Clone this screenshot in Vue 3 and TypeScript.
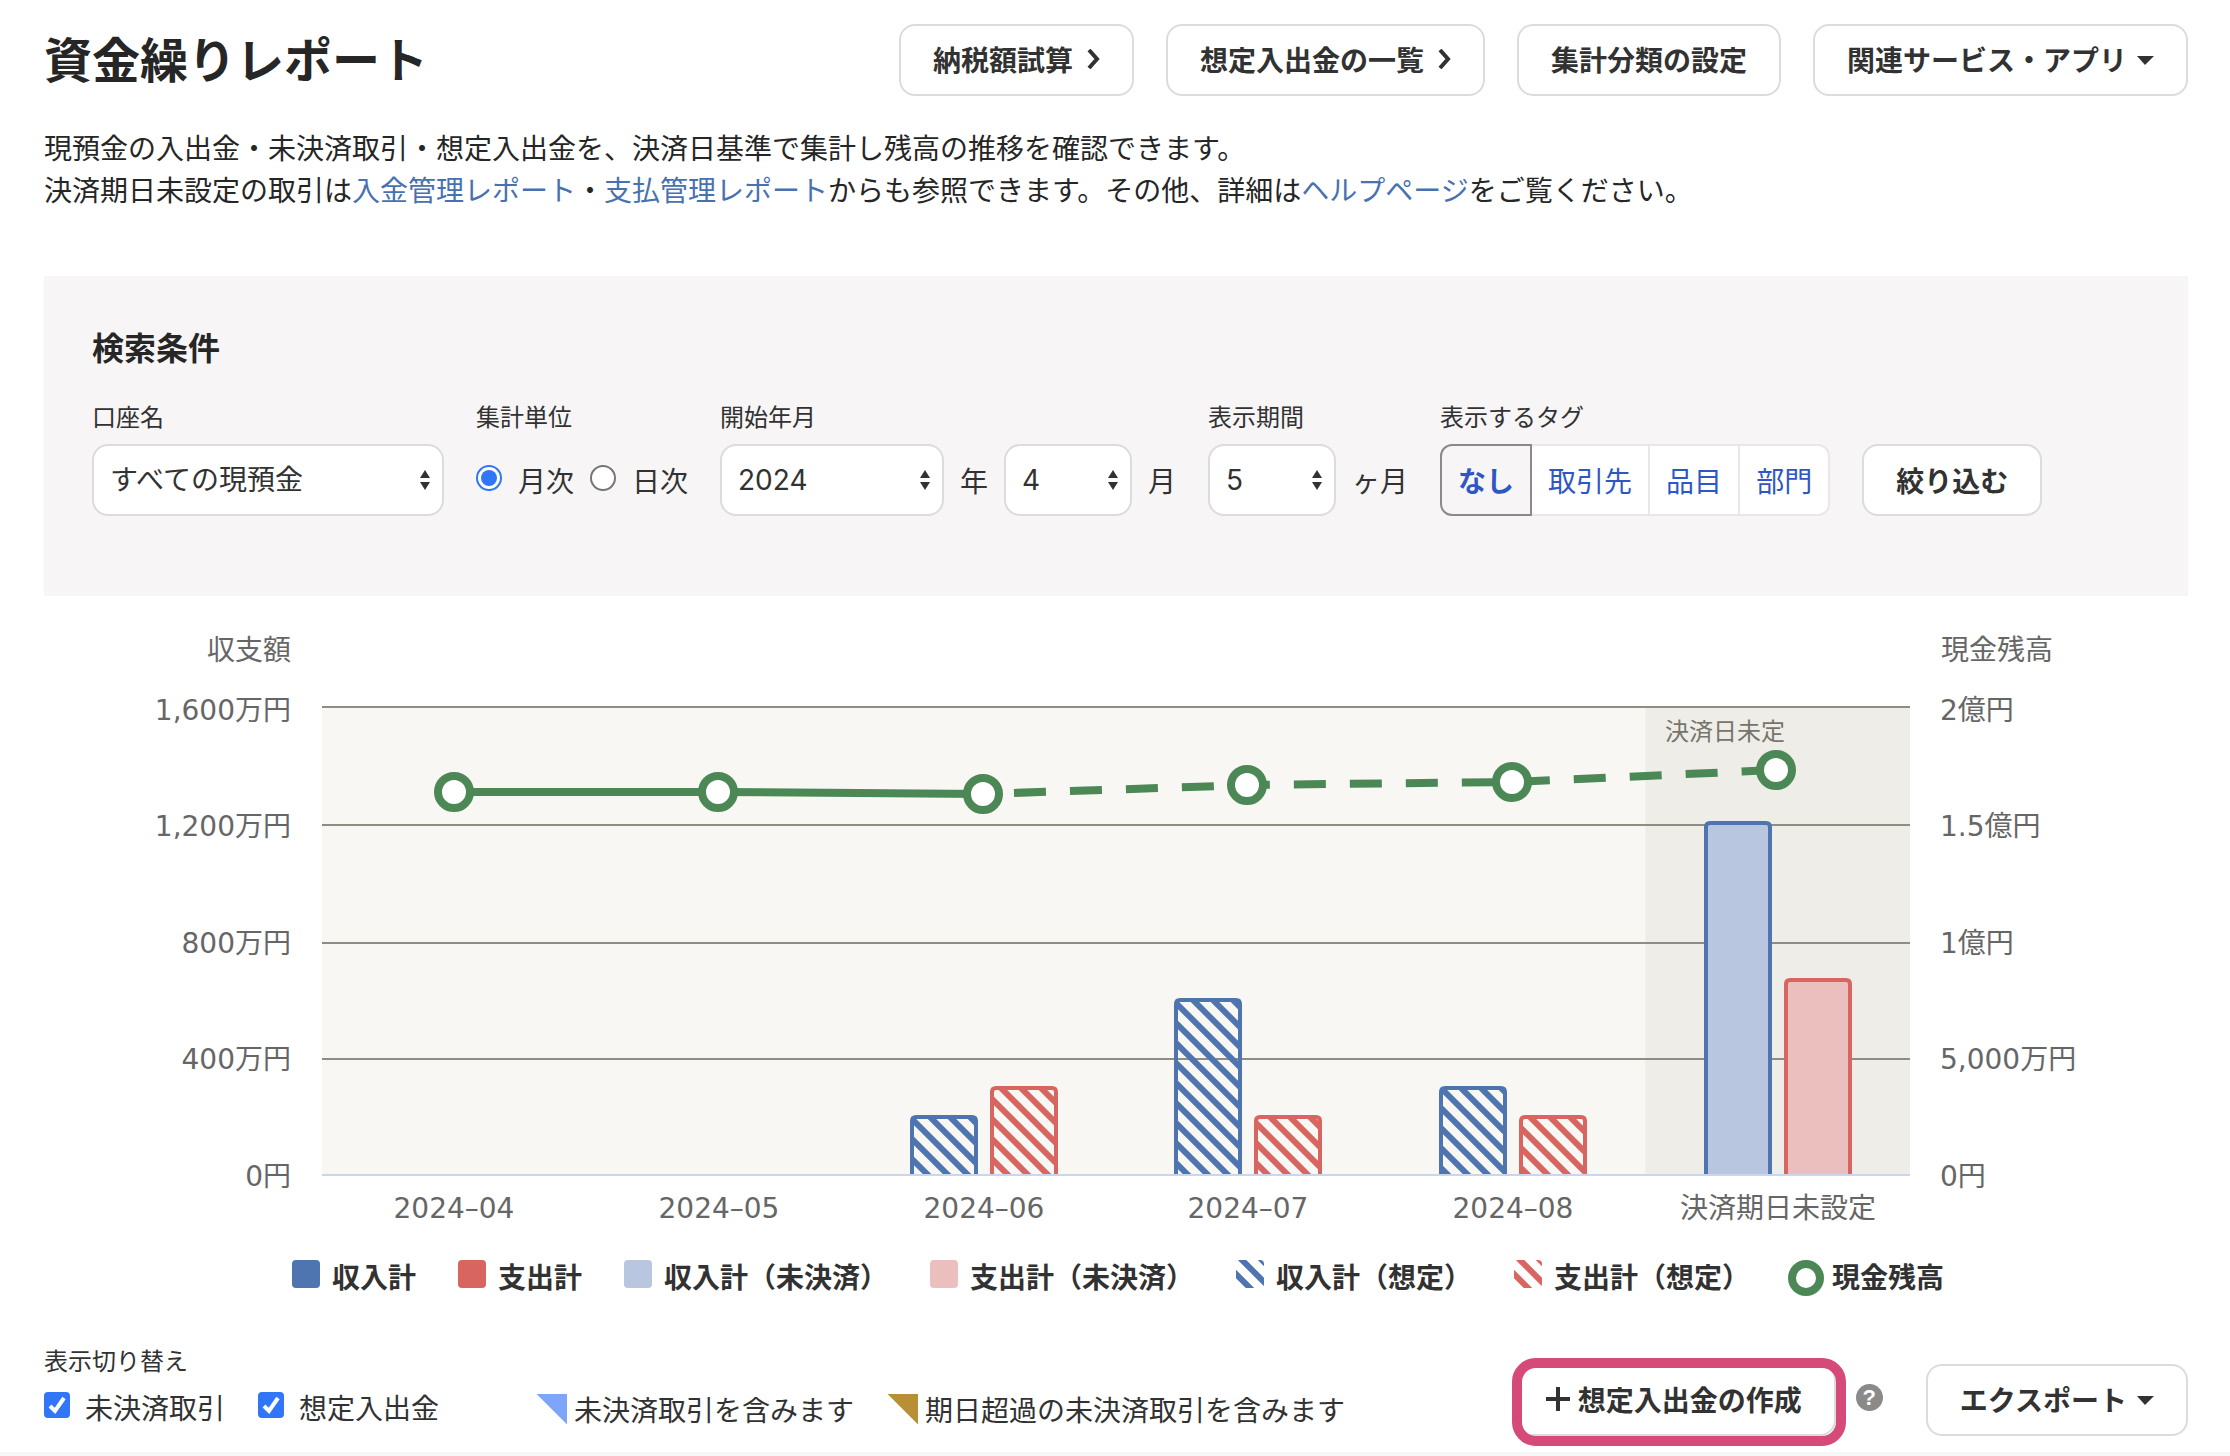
<script setup lang="ts">
import { computed, ref } from 'vue'

type Kind = 'planned' | 'unsettled'

interface Period {
  label: string
  income: number
  expense: number
  balance: number
  kind: Kind
}

const account = ref('すべての現預金')
const unit = ref('monthly')
const year = ref('2024')
const month = ref('4')
const span = ref('5')
const tags = ['なし', '取引先', '品目', '部門']
const activeTag = ref('なし')
const showUnsettled = ref(true)
const showPlanned = ref(true)

// Amounts are in 万円.
const periods: Period[] = [
  { label: '2024–04', income: 0, expense: 0, balance: 16380, kind: 'planned' },
  { label: '2024–05', income: 0, expense: 0, balance: 16380, kind: 'planned' },
  { label: '2024–06', income: 200, expense: 300, balance: 16280, kind: 'planned' },
  { label: '2024–07', income: 600, expense: 200, balance: 16680, kind: 'planned' },
  { label: '2024–08', income: 300, expense: 200, balance: 16780, kind: 'planned' },
  { label: '決済期日未設定', income: 1206, expense: 668, balance: 17320, kind: 'unsettled' },
]

const plot = { left: 278, right: 1866, top: 111, bottom: 579 }
const plotWidth = plot.right - plot.left
const plotHeight = plot.bottom - plot.top
const columnWidth = plotWidth / periods.length
const barWidth = 68
const barStroke = 4

const amountTicks = ['1,600万円', '1,200万円', '800万円', '400万円', '0円']
const balanceTicks = ['2億円', '1.5億円', '1億円', '5,000万円', '0円']
const gridLines = [111, 229, 347, 463]
const tickY = (i: number) => 124 + Math.floor(i * 116.6)

const centers = periods.map((_, i) => Math.round(plot.left + columnWidth * (i + 0.5)))
const points = periods.map((p, i) => ({
  x: Math.round(410 + i * 264.4),
  y: Math.round(plot.bottom - (p.balance / 20000) * plotHeight),
}))
const toPath = (list: { x: number; y: number }[]) =>
  list.map((p, i) => `${i ? 'L' : 'M'}${p.x} ${p.y}`).join(' ')
const actualPath = toPath(points.slice(0, 3))
const forecastPath = toPath(points.slice(2))

const bars = computed(() =>
  periods.flatMap((p, i) =>
    [
      { side: 'income', value: p.income, x: centers[i] - 74 },
      { side: 'expense', value: p.expense, x: centers[i] + 6 },
    ]
      .filter((b) => b.value > 0)
      .filter(() => (p.kind === 'planned' ? showPlanned.value : showUnsettled.value))
      .map((b) => {
        const top = Math.floor(plot.bottom - 1 - (b.value / 1600) * plotHeight)
        const l = b.x + barStroke / 2
        const r = b.x + barWidth - barStroke / 2
        const t = top + barStroke / 2
        return {
          key: `${p.label}-${b.side}`,
          cls: `${b.side} ${p.kind}`,
          d: `M${l} ${plot.bottom - 1} V${t + 4} Q${l} ${t} ${l + 4} ${t} H${r - 4} Q${r} ${t} ${r} ${t + 4} V${plot.bottom - 1}`,
        }
      }),
  ),
)

const legend = [
  { label: '収入計', swatch: 'income-solid' },
  { label: '支出計', swatch: 'expense-solid' },
  { label: '収入計（未決済）', swatch: 'income-light' },
  { label: '支出計（未決済）', swatch: 'expense-light' },
  { label: '収入計（想定）', swatch: 'income-hatch' },
  { label: '支出計（想定）', swatch: 'expense-hatch' },
  { label: '現金残高', swatch: 'ring' },
]
</script>

<template>
  <main class="page">
    <header class="header">
      <h1>資金繰りレポート</h1>
      <nav class="actions">
        <button type="button" class="btn">
          納税額試算
          <svg class="chevron" viewBox="0 0 13 20" aria-hidden="true"><path d="M2 1 L10 10 L2 19" /></svg>
        </button>
        <button type="button" class="btn">
          想定入出金の一覧
          <svg class="chevron" viewBox="0 0 13 20" aria-hidden="true"><path d="M2 1 L10 10 L2 19" /></svg>
        </button>
        <button type="button" class="btn">集計分類の設定</button>
        <button type="button" class="btn">
          関連サービス・アプリ
          <svg class="caret" viewBox="0 0 17 9" aria-hidden="true"><path d="M0 0 H17 L8 9 Z" /></svg>
        </button>
      </nav>
    </header>

    <p class="lead">
      現預金の入出金・未決済取引・想定入出金を、決済日基準で集計し残高の推移を確認できます。<br />決済期日未設定の取引は<a href="#receipts">入金管理レポート</a>・<a href="#payments">支払管理レポート</a>からも参照できます。その他、詳細は<a href="#help">ヘルプページ</a>をご覧ください。
    </p>

    <section class="search">
      <h2>検索条件</h2>
      <form class="filters" @submit.prevent>
        <div class="field">
          <label class="caption" for="account">口座名</label>
          <span class="select wide">
            <select id="account" v-model="account"><option>すべての現預金</option></select>
            <svg viewBox="0 0 10 20" aria-hidden="true"><path d="M0 8 L5 0 L10 8 Z M0 12 H10 L5 20 Z" /></svg>
          </span>
        </div>
        <div class="field" role="radiogroup" aria-labelledby="unit-caption">
          <span id="unit-caption" class="caption">集計単位</span>
          <div class="controls radios">
            <label><input v-model="unit" type="radio" name="unit" value="monthly" />月次</label>
            <label><input v-model="unit" type="radio" name="unit" value="daily" />日次</label>
          </div>
        </div>
        <div class="field">
          <label class="caption" for="year">開始年月</label>
          <div class="controls">
            <span class="select medium">
              <select id="year" v-model="year"><option>2024</option></select>
              <svg viewBox="0 0 10 20" aria-hidden="true"><path d="M0 8 L5 0 L10 8 Z M0 12 H10 L5 20 Z" /></svg>
            </span>
            <span>年</span>
            <span class="select narrow">
              <select id="month" v-model="month" aria-label="開始月"><option>4</option></select>
              <svg viewBox="0 0 10 20" aria-hidden="true"><path d="M0 8 L5 0 L10 8 Z M0 12 H10 L5 20 Z" /></svg>
            </span>
            <span>月</span>
          </div>
        </div>
        <div class="field">
          <label class="caption" for="span">表示期間</label>
          <div class="controls">
            <span class="select narrow">
              <select id="span" v-model="span"><option>5</option></select>
              <svg viewBox="0 0 10 20" aria-hidden="true"><path d="M0 8 L5 0 L10 8 Z M0 12 H10 L5 20 Z" /></svg>
            </span>
            <span>ヶ月</span>
          </div>
        </div>
        <div class="field" role="group" aria-labelledby="tag-caption">
          <span id="tag-caption" class="caption">表示するタグ</span>
          <div class="tags">
            <button
              v-for="tag in tags"
              :key="tag"
              type="button"
              :class="{ active: tag === activeTag }"
              :aria-pressed="tag === activeTag"
              @click="activeTag = tag"
            >{{ tag }}</button>
          </div>
        </div>
        <button type="submit" class="btn submit">絞り込む</button>
      </form>
    </section>

    <section class="report">
      <svg class="chart" viewBox="0 0 2144 644" role="img" aria-label="収支額と現金残高の推移">
        <defs>
          <pattern id="hatch-income" width="20" height="20" patternUnits="userSpaceOnUse">
            <path class="hatch-income" d="M-20 -25 L40 35 M-20 -5 L40 55 M-20 -45 L40 15" />
          </pattern>
          <pattern id="hatch-expense" width="20" height="20" patternUnits="userSpaceOnUse">
            <path class="hatch-expense" d="M-20 -25 L40 35 M-20 -5 L40 55 M-20 -45 L40 15" />
          </pattern>
        </defs>
        <rect class="plot" :x="plot.left" :y="plot.top" :width="plotWidth" :height="plotHeight" />
        <rect
          class="plot-undated"
          :x="plot.right - columnWidth"
          :y="plot.top"
          :width="columnWidth"
          :height="plotHeight"
        />
        <line v-for="y in gridLines" :key="y" class="grid" :x1="plot.left" :x2="plot.right" :y1="y" :y2="y" />
        <text class="undated" x="1621" y="144">決済日未定</text>
        <path v-for="bar in bars" :key="bar.key" class="bar" :class="bar.cls" :d="bar.d" />
        <line class="base" :x1="plot.left" :x2="plot.right" :y1="plot.bottom" :y2="plot.bottom" />
        <path class="balance" :d="actualPath" />
        <path class="balance forecast" :d="forecastPath" />
        <circle v-for="p in points" :key="p.x" class="marker" :cx="p.x" :cy="p.y" r="16" />
        <g class="axis">
          <text x="247" y="64" text-anchor="end">収支額</text>
          <text x="1897" y="64">現金残高</text>
          <text v-for="(t, i) in amountTicks" :key="'a' + t" x="247" :y="tickY(i)" text-anchor="end">{{ t }}</text>
          <text v-for="(t, i) in balanceTicks" :key="'b' + t" x="1896" :y="tickY(i)">{{ t }}</text>
          <text v-for="(p, i) in periods" :key="p.label" :x="centers[i]" y="622" text-anchor="middle">{{ p.label }}</text>
        </g>
      </svg>

      <ul class="legend">
        <li v-for="item in legend" :key="item.swatch">
          <svg v-if="item.swatch === 'ring'" class="ring" viewBox="0 0 36 36" aria-hidden="true">
            <circle cx="18" cy="18" r="14" />
          </svg>
          <svg v-else-if="item.swatch.endsWith('hatch')" class="hatch" :class="item.swatch" viewBox="0 0 28 28" aria-hidden="true">
            <path d="M-10 4 L30 44 M-10 -16 L40 34 M10 -16 L40 14" />
          </svg>
          <span v-else class="swatch" :class="item.swatch"></span>
          {{ item.label }}
        </li>
      </ul>
    </section>

    <section class="footer">
      <div class="toggles">
        <span id="toggle-caption" class="caption">表示切り替え</span>
        <div class="toggle-row">
          <div class="checks" role="group" aria-labelledby="toggle-caption">
            <label>
              <input v-model="showUnsettled" type="checkbox" />
              <svg viewBox="0 0 26 26" aria-hidden="true"><path d="M6 14 L11 19 L20 6" /></svg>
              未決済取引
            </label>
            <label>
              <input v-model="showPlanned" type="checkbox" />
              <svg viewBox="0 0 26 26" aria-hidden="true"><path d="M6 14 L11 19 L20 6" /></svg>
              想定入出金
            </label>
          </div>
          <div class="notes">
            <span class="note"><i class="corner blue"></i>未決済取引を含みます</span>
            <span class="note"><i class="corner gold"></i>期日超過の未決済取引を含みます</span>
          </div>
        </div>
      </div>
      <div class="operations">
        <span class="highlight">
          <button type="button" class="btn">
            <svg class="plus" viewBox="0 0 24 24" aria-hidden="true"><path d="M12 0 V24 M0 12 H24" /></svg>
            想定入出金の作成
          </button>
        </span>
        <button type="button" class="help" aria-label="ヘルプ">?</button>
        <button type="button" class="btn">
          エクスポート
          <svg class="caret" viewBox="0 0 17 9" aria-hidden="true"><path d="M0 0 H17 L8 9 Z" /></svg>
        </button>
      </div>
    </section>
  </main>
</template>

<style>
html {
  background: #f6f6f6;
}
</style>

<style scoped>
.page {
  box-sizing: border-box;
  padding: 24px 42px 16px 44px;
  background: #fff;
  color: #323232;
  font-family: 'Noto Sans CJK JP', sans-serif;
  font-size: 28px;
  line-height: 42px;
}

h1,
h2,
p,
ul {
  margin: 0;
  padding: 0;
}

button,
select {
  font: inherit;
  color: inherit;
}

.header {
  display: flex;
  align-items: flex-start;
  justify-content: space-between;
}

h1 {
  color: #262626;
  font-size: 48px;
  line-height: 66px;
}

.actions {
  display: flex;
  gap: 32px;
}

.btn {
  box-sizing: border-box;
  display: inline-flex;
  align-items: center;
  justify-content: center;
  height: 72px;
  padding: 0 32px 2px;
  border: 2px solid #dcdcdc;
  border-radius: 16px;
  background: #fff;
  font-weight: 700;
  white-space: nowrap;
}

.chevron {
  width: 13px;
  height: 20px;
  margin-left: 14px;
  fill: none;
  stroke: #323232;
  stroke-width: 4;
}

.caret {
  width: 17px;
  height: 9px;
  margin: 2px 0 0 10px;
  fill: #323232;
}

.lead {
  margin-top: 30px;
  color: #262626;
}

a {
  color: #4871b0;
  text-decoration: none;
}

.search {
  margin-top: 66px;
  padding: 46px 48px 80px;
  background: #f7f5f6;
}

h2 {
  margin-bottom: 28px;
  color: #262626;
  font-size: 32px;
  line-height: 48px;
}

.filters {
  display: flex;
  align-items: flex-end;
  gap: 32px;
}

.field {
  display: flex;
  flex-direction: column;
  gap: 10px;
}

.caption {
  font-size: 24px;
  line-height: 36px;
}

.controls {
  display: flex;
  align-items: center;
  gap: 16px;
  height: 72px;
}

.select {
  position: relative;
  display: block;
}

.select select {
  box-sizing: border-box;
  display: block;
  width: 100%;
  height: 72px;
  padding: 0 32px 0 16px;
  border: 2px solid #dcdcdc;
  border-radius: 16px;
  background: #fff;
  font-family: Inter, 'Noto Sans CJK JP', sans-serif;
  appearance: none;
}

.select svg {
  position: absolute;
  top: 26px;
  right: 14px;
  width: 10px;
  height: 20px;
  fill: #323232;
  pointer-events: none;
}

.wide {
  width: 352px;
}

.medium {
  width: 224px;
}

.narrow {
  width: 128px;
}

.radios label {
  display: flex;
  align-items: center;
  gap: 16px;
}

.radios input {
  display: grid;
  place-items: center;
  box-sizing: border-box;
  width: 26px;
  height: 26px;
  margin: 0 0 4px;
  border: 2px solid #767676;
  border-radius: 50%;
  background: #fff;
  appearance: none;
}

.radios input:checked {
  border-color: #3076f6;
}

.radios input:checked::before {
  width: 16px;
  height: 16px;
  border-radius: 50%;
  background: #3076f6;
  content: '';
}

.tags {
  display: flex;
}

.tags button {
  box-sizing: border-box;
  height: 72px;
  margin-left: -2px;
  padding: 0 16px;
  border: 2px solid #e9e7e7;
  background: #fff;
  color: #2f57c4;
}

.tags button:first-child {
  margin-left: 0;
  border-radius: 12px 0 0 12px;
}

.tags button:last-child {
  border-radius: 0 12px 12px 0;
}

.tags button.active {
  z-index: 1;
  border-color: #8c8989;
  background: #f7f5f6;
  font-weight: 700;
}

.submit {
  padding: 0 32px;
}

.chart {
  display: block;
  width: 100%;
  height: auto;
}

.plot {
  fill: #f8f7f4;
}

.plot-undated {
  fill: #eeede8;
}

.grid {
  stroke: #8f8d82;
  stroke-width: 2;
}

.base {
  stroke: #ccd6eb;
  stroke-width: 2;
}

.axis {
  fill: #666;
  font-family: 'DejaVu Sans', 'Noto Sans CJK JP', sans-serif;
  font-size: 28px;
}

.undated {
  fill: #77756a;
  font-size: 24px;
}

.hatch-income {
  fill: none;
  stroke: #4f75b0;
  stroke-width: 6;
}

.hatch-expense {
  fill: none;
  stroke: #d8655f;
  stroke-width: 6;
}

.bar {
  stroke-width: 4;
}

.bar.income {
  stroke: #4f75b0;
}

.bar.expense {
  stroke: #d8655f;
}

.income.planned {
  fill: url(#hatch-income);
}

.expense.planned {
  fill: url(#hatch-expense);
}

.income.unsettled {
  fill: #b8c6df;
}

.expense.unsettled {
  fill: #ecbfbf;
}

.balance {
  fill: none;
  stroke: #4c8756;
  stroke-width: 8;
}

.forecast {
  stroke-dasharray: 32 24;
  stroke-dashoffset: 25;
}

.marker {
  fill: #fff;
  stroke: #4c8756;
  stroke-width: 8;
}

.legend {
  display: flex;
  justify-content: center;
  gap: 42px;
  margin-top: 16px;
  padding-left: 4px;
  font-weight: 700;
  line-height: 40px;
  list-style: none;
}

.legend li {
  display: flex;
  align-items: center;
  gap: 12px;
  white-space: nowrap;
}

.swatch,
.hatch {
  width: 28px;
  height: 28px;
  margin-bottom: 4px;
  border-radius: 4px;
}

.hatch path {
  stroke-width: 6;
}

.income-solid {
  background: #4f75b0;
}

.expense-solid {
  background: #d8655f;
}

.income-light {
  background: #b8c6df;
}

.expense-light {
  background: #ecbfbf;
}

svg.income-hatch {
  stroke: #4f75b0;
}

svg.expense-hatch {
  stroke: #d8655f;
}

.ring {
  width: 36px;
  height: 36px;
  margin: 4px -4px 0;
  fill: none;
  stroke: #4c8756;
  stroke-width: 8;
}

.footer {
  display: flex;
  align-items: flex-end;
  justify-content: space-between;
  margin-top: 46px;
}

.toggles {
  display: flex;
  flex-direction: column;
  gap: 8px;
  padding-bottom: 6px;
}

.toggle-row {
  display: flex;
  align-items: flex-start;
  gap: 97px;
  white-space: nowrap;
}

.checks,
.notes {
  display: flex;
  gap: 33px;
}

.checks label {
  position: relative;
  display: flex;
  align-items: center;
  gap: 15px;
}

.checks input {
  width: 26px;
  height: 26px;
  margin: 0 0 4px;
  border-radius: 4px;
  border: 2px solid #767676;
  box-sizing: border-box;
  background: #fff;
  appearance: none;
}

.checks input:checked {
  border-color: #3076f6;
  background: #3076f6;
}

.checks svg {
  position: absolute;
  top: 6px;
  left: 0;
  width: 26px;
  height: 26px;
  fill: none;
  stroke: #fff;
  stroke-width: 4;
  pointer-events: none;
}

.notes {
  padding-top: 2px;
}

.note {
  display: flex;
  align-items: center;
  gap: 7px;
}

.corner {
  width: 31px;
  height: 31px;
  clip-path: polygon(0 0, 100% 0, 100% 100%);
}

.blue {
  background: #7fa5fa;
}

.gold {
  background: #b88f35;
}

.operations {
  display: flex;
  align-items: center;
}

.highlight {
  position: relative;
  display: flex;
}

.highlight::after {
  position: absolute;
  inset: -6px -10px -10px 0;
  border: 10px solid #d64a7a;
  border-radius: 24px;
  content: '';
  pointer-events: none;
}

.plus {
  width: 24px;
  height: 24px;
  margin-right: 8px;
  stroke: #323232;
  stroke-width: 4;
}

.help {
  width: 27px;
  height: 27px;
  margin: 0 43px 6px 20px;
  padding: 0;
  border: 0;
  border-radius: 50%;
  background: #8c8989;
  color: #fff;
  font-family: 'Liberation Sans', sans-serif;
  font-size: 22px;
  font-weight: 700;
  line-height: 27px;
}
</style>
